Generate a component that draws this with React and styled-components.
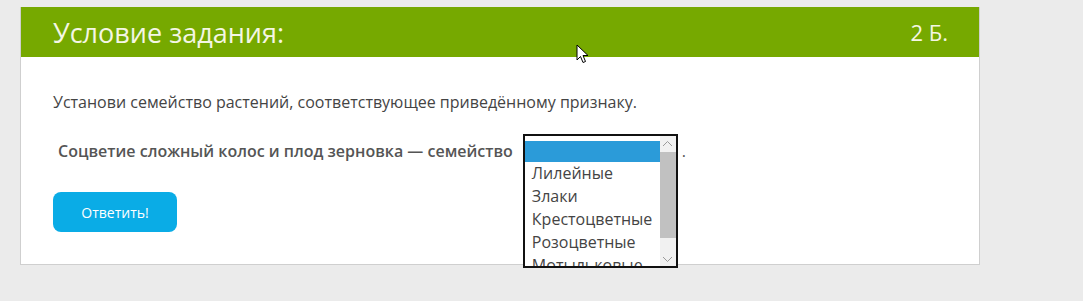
import React from 'react';
import styled, { createGlobalStyle } from 'styled-components';

const GlobalStyle = createGlobalStyle`
  html, body {
    margin: 0;
    padding: 0;
    background: #ebebeb;
    font-family: 'Open Sans', 'Liberation Sans', sans-serif;
  }
`;

const options = ['', 'Лилейные', 'Злаки', 'Крестоцветные', 'Розоцветные', 'Мотыльковые'];

const Page = styled.div`
  position: relative;
  width: 1083px;
  height: 301px;
  padding: 7px 0 0 20px;
  box-sizing: border-box;
`;

const Card = styled.section`
  width: 960px;
  height: 258px;
  box-sizing: border-box;
  background: #fff;
  border: 1px solid #cfcfcf;
  border-top: none;
`;

const Header = styled.header`
  height: 50px;
  background: #76a900;
  display: flex;
  align-items: center;
  justify-content: space-between;
  padding: 0 31px 0 32px;
  color: #f4f6e4;
  font-size: 27px;
  line-height: 1;
`;

const Points = styled.span`
  font-size: 22px;
`;

const Body = styled.div`
  padding: 34px 32px 0;
  color: #444;
  font-size: 16px;
`;

const Lead = styled.p`
  margin: 0;
  line-height: 22px;
`;

const Question = styled.div`
  display: flex;
  align-items: flex-start;
  margin-top: 21px;
  height: 58px;
  font-weight: 600;
  color: #555;
`;

const QText = styled.span`
  padding: 7px 10px 0 5px;
  line-height: 20px;
`;

const Dot = styled.span`
  padding: 7px 0 0 4px;
  font-weight: 400;
  line-height: 20px;
`;

const ListBox = styled.div`
  position: relative;
  z-index: 1;
  width: 155px;
  height: 134px;
  box-sizing: border-box;
  border: 2px solid #111;
  background: #fff;
  display: flex;
  overflow: hidden;
`;

const Items = styled.div`
  flex: 1;
  padding-top: 5px;
  font-weight: 400;
  color: #444;
`;

const Item = styled.div`
  height: ${p => (p.$empty ? '21px' : '23px')};
  line-height: 22px;
  padding-left: 7px;
  white-space: nowrap;
  background: ${p => (p.$selected ? '#2b9bd9' : 'transparent')};
`;

const Scrollbar = styled.div`
  width: 16px;
  background: #f1f1f1;
  display: flex;
  flex-direction: column;
`;

const Arrow = styled.div`
  height: 14px;
  display: flex;
  align-items: center;
  justify-content: center;
`;

const Track = styled.div`
  flex: 1;
  padding: 2px 0 14px;
  display: flex;
`;

const Thumb = styled.div`
  flex: 1;
  background: #c1c1c1;
`;

const Button = styled.button`
  width: 124px;
  height: 40px;
  border: none;
  border-radius: 8px;
  background: #0aace6;
  color: #fff;
  font-family: inherit;
  font-size: 14px;
`;

const Cursor = styled.svg`
  position: absolute;
  left: 576px;
  top: 44px;
`;

function Chevron ({ up }) {
  return (
    <svg width='11' height='7' viewBox='0 0 11 7'>
      <path d={up ? 'M1 6 L5.5 1.5 L10 6' : 'M1 1 L5.5 5.5 L10 1'} fill='none' stroke='#9a9a9a' strokeWidth='1' />
    </svg>
  );
}

export default function App () {
  return (
    <Page>
      <GlobalStyle />
      <Card>
        <Header>
          <span>Условие задания:</span>
          <Points>2 Б.</Points>
        </Header>
        <Body>
          <Lead>Установи семейство растений, соответствующее приведённому признаку.</Lead>
          <Question>
            <QText>Соцветие сложный колос и плод зерновка — семейство</QText>
            <ListBox>
              <Items>
                {options.map((o, i) => (
                  <Item key={i} $empty={!o} $selected={i === 0}>{o}</Item>
                ))}
              </Items>
              <Scrollbar>
                <Arrow><Chevron up /></Arrow>
                <Track><Thumb /></Track>
                <Arrow><Chevron /></Arrow>
              </Scrollbar>
            </ListBox>
            <Dot>.</Dot>
          </Question>
          <Button>Ответить!</Button>
        </Body>
      </Card>
      <Cursor width='13' height='20' viewBox='0 0 13 20'>
        <path d='M1 1 L1 16 L4.5 12.5 L7 18.5 L9.5 17.5 L7 11.5 L12 11.5 Z' fill='#fff' stroke='#000' strokeWidth='1' strokeLinejoin='round' />
      </Cursor>
    </Page>
  );
}
